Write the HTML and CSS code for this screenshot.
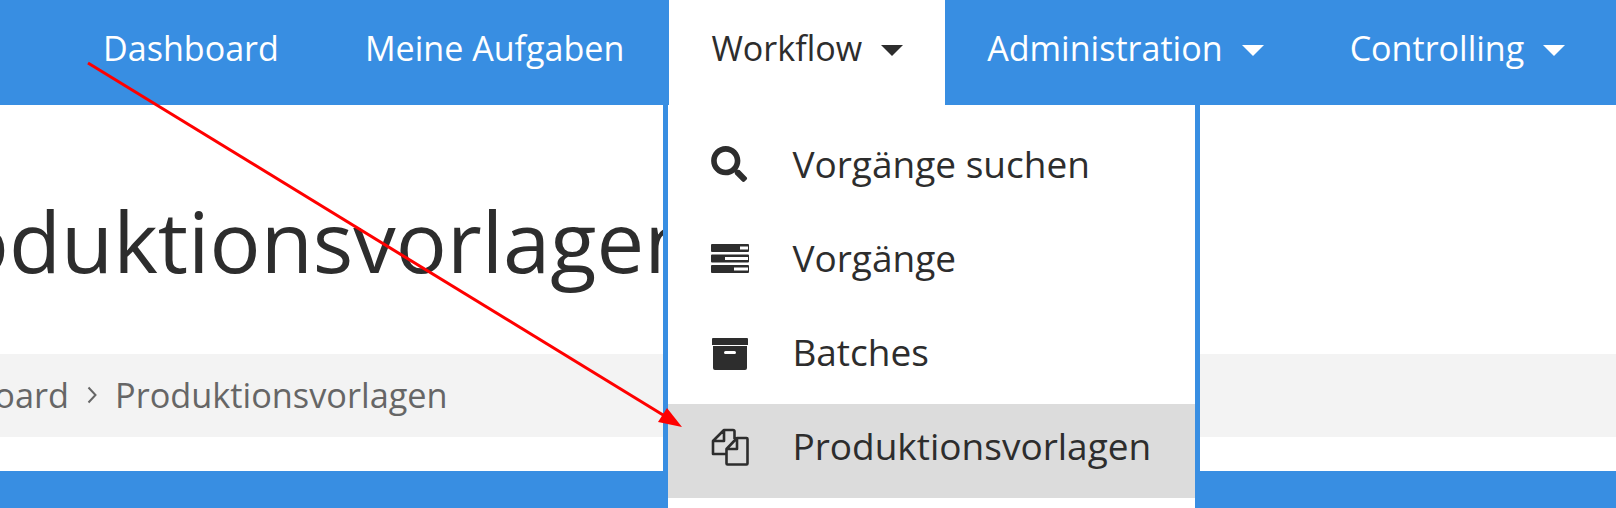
FILE: index.html
```html
<!DOCTYPE html>
<html lang="de">
<head>
  <meta charset="UTF-8">
  <title>Produktionsvorlagen</title>
  <link rel="stylesheet" href="styles.css">
</head>
<body>

  <nav class="topbar">
    <a class="nav-item" href="#">Dashboard</a>
    <a class="nav-item" href="#">Meine Aufgaben</a>
    <div class="nav-item open">
      Workflow <span class="caret"></span>
      <ul class="dropdown">
        <li>
          <svg class="icon" width="38" height="36" viewBox="0 0 537 512"><path d="M505 442.7L405.3 343c-4.5-4.5-10.6-7-17-7H372c27.6-35.3 44-79.7 44-128C416 93.1 322.9 0 208 0S0 93.1 0 208s93.1 208 208 208c48.3 0 92.7-16.4 128-44v16.3c0 6.4 2.5 12.5 7 17l99.7 99.7c9.4 9.4 24.6 9.4 33.9 0l28.3-28.3c9.4-9.4 9.4-24.6.1-34zM208 336c-70.7 0-128-57.2-128-128 0-70.7 57.2-128 128-128 70.7 0 128 57.2 128 128 0 70.7-57.2 128-128 128z"/></svg>
          Vorgänge suchen
        </li>
        <li>
          <svg class="icon" width="38" height="29" viewBox="0 0 38 29"><path fill-rule="evenodd" d="M1 0h36a1 1 0 0 1 1 1v6a1 1 0 0 1-1 1H1a1 1 0 0 1-1-1V1a1 1 0 0 1 1-1zm28 2.500v3h8v-3zM1 10.500h36a1 1 0 0 1 1 1v6a1 1 0 0 1-1 1H1a1 1 0 0 1-1-1v-6a1 1 0 0 1 1-1zm13 2.500v3h23v-3zM1 21h36a1 1 0 0 1 1 1v6a1 1 0 0 1-1 1H1a1 1 0 0 1-1-1v-6a1 1 0 0 1 1-1zm22 2.500v3h14v-3z"/></svg>
          Vorgänge
        </li>
        <li>
          <svg class="icon" width="38" height="36" viewBox="-1 -4 38 36"><path fill-rule="evenodd" d="M1 0h34a1 1 0 0 1 1 1v6H0V1a1 1 0 0 1 1-1zM1 8h34v22a2 2 0 0 1-2 2H3a2 2 0 0 1-2-2zm12.500 5a1 1 0 0 0 0 3h9a1 1 0 0 0 0-3z"/></svg>
          Batches
        </li>
        <li class="active">
          <svg class="icon" width="38" height="40" viewBox="0 -2 38 40"><path fill="none" stroke="#2d2d2d" stroke-width="2.600" stroke-linejoin="round" d="M15 26H2V13L13 2h9a1.500 1.500 0 0 1 1.500 1.500V11M13 2v11H2M26 10h9.500a1 1 0 0 1 1 1v24.500a1 1 0 0 1-1 1H16.500a1 1 0 0 1-1-1V21zM26 10v11H15.500"/></svg>
          Produktionsvorlagen
        </li>
      </ul>
    </div>
    <a class="nav-item" href="#">Administration <span class="caret"></span></a>
    <a class="nav-item" href="#">Controlling <span class="caret"></span></a>
  </nav>

  <main>
    <h1 class="page-title">Produktionsvorlagen</h1>
    <div class="breadcrumb">
      <span class="crumbs">
        <span>Dashboard</span>
        <svg class="crumb-sep" width="10" height="18" viewBox="0 0 10 18"><path d="M1.500 1.500 8.500 9l-7 7.500" fill="none" stroke="#666" stroke-width="2"/></svg>
        <span>Produktionsvorlagen</span>
      </span>
    </div>
  </main>

  <footer class="bottom-bar"></footer>

  <!-- annotation drawn on top of the screenshot -->
  <svg class="annotation" width="1616" height="508" viewBox="0 0 1616 508">
    <line x1="88" y1="63" x2="668" y2="418" stroke="#f00" stroke-width="3"/>
    <polygon points="682,427 658,422 667,408" fill="#f00"/>
  </svg>

</body>
</html>
```

FILE: styles.css
```css
body {
  margin: 0;
  height: 508px;
  overflow: hidden;
  font-family: "Open Sans", sans-serif;
  font-size: 34.1px;
  color: #2d2d2d;
  background: #fff;
}
.topbar {
  display: flex;
  height: 105px;
  padding-left: 60px;
  background: #388ee2;
}
.nav-item {
  position: relative;
  display: flex;
  align-items: center;
  gap: 19px;
  padding: 0 43px 10px;
  color: #fff;
  text-decoration: none;
  white-space: nowrap;
}
.nav-item.open {
  margin: 0 -1px 0 2px;
  padding: 0 42px 10px;
  background: #fff;
  color: #2d2d2d;
}
.caret {
  width: 0;
  height: 0;
  margin-top: 5px;
  border-left: 11px solid transparent;
  border-right: 11px solid transparent;
  border-top: 11px solid currentColor;
}
.dropdown {
  position: absolute;
  top: 105px;
  left: -6px;
  z-index: 2;
  width: 527px;
  height: 403px;
  margin: 0;
  padding: 17px 0 0;
  list-style: none;
  font-size: 37px;
  background: #fff;
  border-left: 5px solid #388ee2;
  border-right: 5px solid #388ee2;
}
.dropdown li {
  display: flex;
  align-items: center;
  gap: 43px;
  box-sizing: border-box;
  height: 94px;
  padding: 0 0 12px 43px;
}
.dropdown li.active {
  background: #dcdcdc;
}
.icon {
  flex: none;
  margin-top: 2px;
  fill: #2d2d2d;
}
.page-title {
  height: 249px;
  margin: 0 0 0 -128px;
  box-sizing: border-box;
  padding-top: 77px;
  font-size: 85px;
  font-weight: 400;
  line-height: 116px;
  white-space: nowrap;
}
.breadcrumb {
  height: 83px;
  margin-bottom: 34px;
  background: #f3f3f3;
  color: #666;
  font-size: 34.3px;
  line-height: 81px;
  white-space: nowrap;
}
.crumbs {
  display: flex;
  align-items: center;
  gap: 18px;
  margin-left: -108px;
}
.bottom-bar {
  height: 37px;
  background: #388ee2;
}
.annotation {
  position: absolute;
  top: 0;
  left: 0;
  z-index: 3;
  pointer-events: none;
}
```
